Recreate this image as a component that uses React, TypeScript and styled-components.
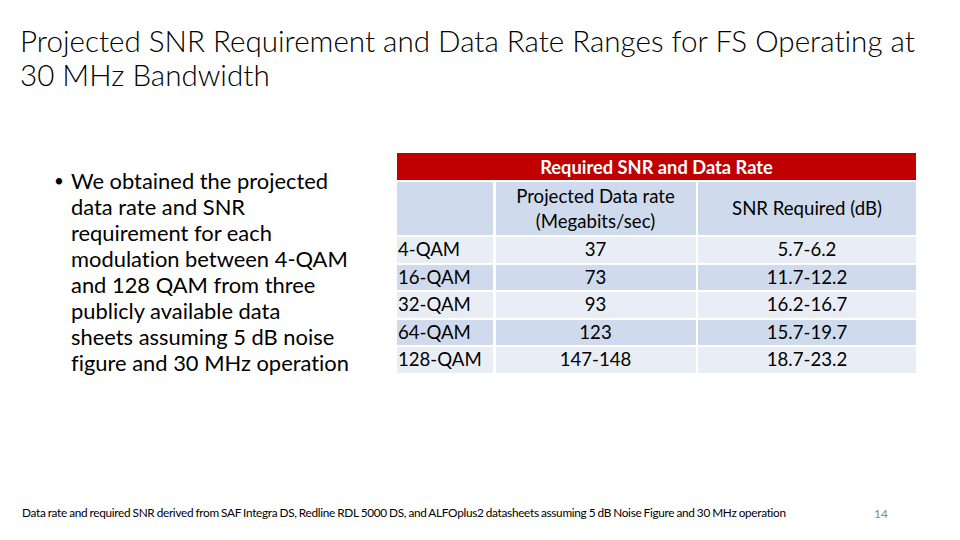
import React from "react";
import styled, { createGlobalStyle } from "styled-components";

const Global = createGlobalStyle`
  html, body { margin: 0; padding: 0; background: #ffffff; }
  body {
    font-family: Lato, "Open Sans", sans-serif;
    color: #000;
    font-variant-ligatures: no-common-ligatures;
    font-feature-settings: "liga" 0, "clig" 0;
  }
`;

const Slide = styled.div`
  width: 960px;
  height: 540px;
  box-sizing: border-box;
  padding: 24px 0 0 20px;
  display: flex;
  flex-direction: column;
  overflow: hidden;
  position: relative;
`;

const Title = styled.h1`
  margin: 0;
  font-weight: 300;
  font-size: 29.6px;
  line-height: 34px;
  letter-spacing: 0;
  color: #000;
  width: 912px;
`;

const Body = styled.div`
  display: flex;
  align-items: flex-start;
  margin-top: 61px;
`;

const BulletCol = styled.div`
  width: 340px;
  padding: 15px 0 0 34px;
  box-sizing: border-box;
  flex: none;
`;

const Bullet = styled.div`
  display: flex;
  font-size: 21.9px;
  line-height: 26px;
`;

const Dot = styled.span`
  width: 17px;
  flex: none;
  font-size: 17px;
  line-height: 26px;
`;

const Lines = styled.div`
  display: flex;
  flex-direction: column;
  white-space: nowrap;
`;

const Table = styled.div`
  margin-left: 37px;
  display: grid;
  grid-template-columns: 96px 200px 218px;
  grid-template-rows: 27px 53px repeat(5, 25.5px);
  gap: 2px 2.5px;
  font-size: 18.6px;
`;

const HeadCell = styled.div`
  grid-column: 1 / 4;
  background: #c00000;
  color: #fff;
  font-weight: 700;
  font-size: 18.3px;
  display: flex;
  align-items: center;
  justify-content: center;
`;

const Cell = styled.div<{ $tone: "head" | "light" | "dark"; $left?: boolean }>`
  background: ${(p) => (p.$tone === "light" ? "#e9eef6" : "#cfdbec")};
  display: flex;
  align-items: center;
  justify-content: ${(p) => (p.$left ? "flex-start" : "center")};
  text-align: center;
  padding-left: ${(p) => (p.$left ? "1px" : "0")};
  line-height: 25px;
  color: #000;
`;

const Footer = styled.div`
  position: absolute;
  left: 22px;
  top: 505px;
  font-size: 11.8px;
  letter-spacing: -0.3px;
  word-spacing: -0.5px;
  color: #000;
  white-space: nowrap;
`;

const PageNum = styled.div`
  position: absolute;
  left: 874px;
  top: 506px;
  font-size: 12px;
  color: #8a8a8a;
`;

const rows = [
  ["4-QAM", "37", "5.7-6.2"],
  ["16-QAM", "73", "11.7-12.2"],
  ["32-QAM", "93", "16.2-16.7"],
  ["64-QAM", "123", "15.7-19.7"],
  ["128-QAM", "147-148", "18.7-23.2"],
];

const bulletLines = [
  "We obtained the projected",
  "data rate and SNR",
  "requirement for each",
  "modulation between 4-QAM",
  "and 128 QAM from three",
  "publicly available data",
  "sheets assuming 5 dB noise",
  "figure and 30 MHz operation",
];

export default function App() {
  return (
    <Slide>
      <Global />
      <Title>
        Projected SNR Requirement and Data Rate Ranges for FS Operating at 30 MHz Bandwidth
      </Title>
      <Body>
        <BulletCol>
          <Bullet>
            <Dot>•</Dot>
            <Lines>
              {bulletLines.map((l) => (
                <span key={l}>{l}</span>
              ))}
            </Lines>
          </Bullet>
        </BulletCol>
        <Table>
          <HeadCell>Required SNR and Data Rate</HeadCell>
          <Cell $tone="head" />
          <Cell $tone="head">
            Projected Data rate
            <br />
            (Megabits/sec)
          </Cell>
          <Cell $tone="head">SNR Required (dB)</Cell>
          {rows.map((r, i) => {
            const tone = i % 2 === 0 ? "light" : "dark";
            return (
              <React.Fragment key={r[0]}>
                <Cell $tone={tone} $left>
                  {r[0]}
                </Cell>
                <Cell $tone={tone}>{r[1]}</Cell>
                <Cell $tone={tone}>{r[2]}</Cell>
              </React.Fragment>
            );
          })}
        </Table>
      </Body>
      <Footer>
        Data rate and required SNR derived from SAF Integra DS, Redline RDL 5000 DS, and ALFOplus2 datasheets
        assuming 5 dB Noise Figure and 30 MHz operation
      </Footer>
      <PageNum>14</PageNum>
    </Slide>
  );
}
